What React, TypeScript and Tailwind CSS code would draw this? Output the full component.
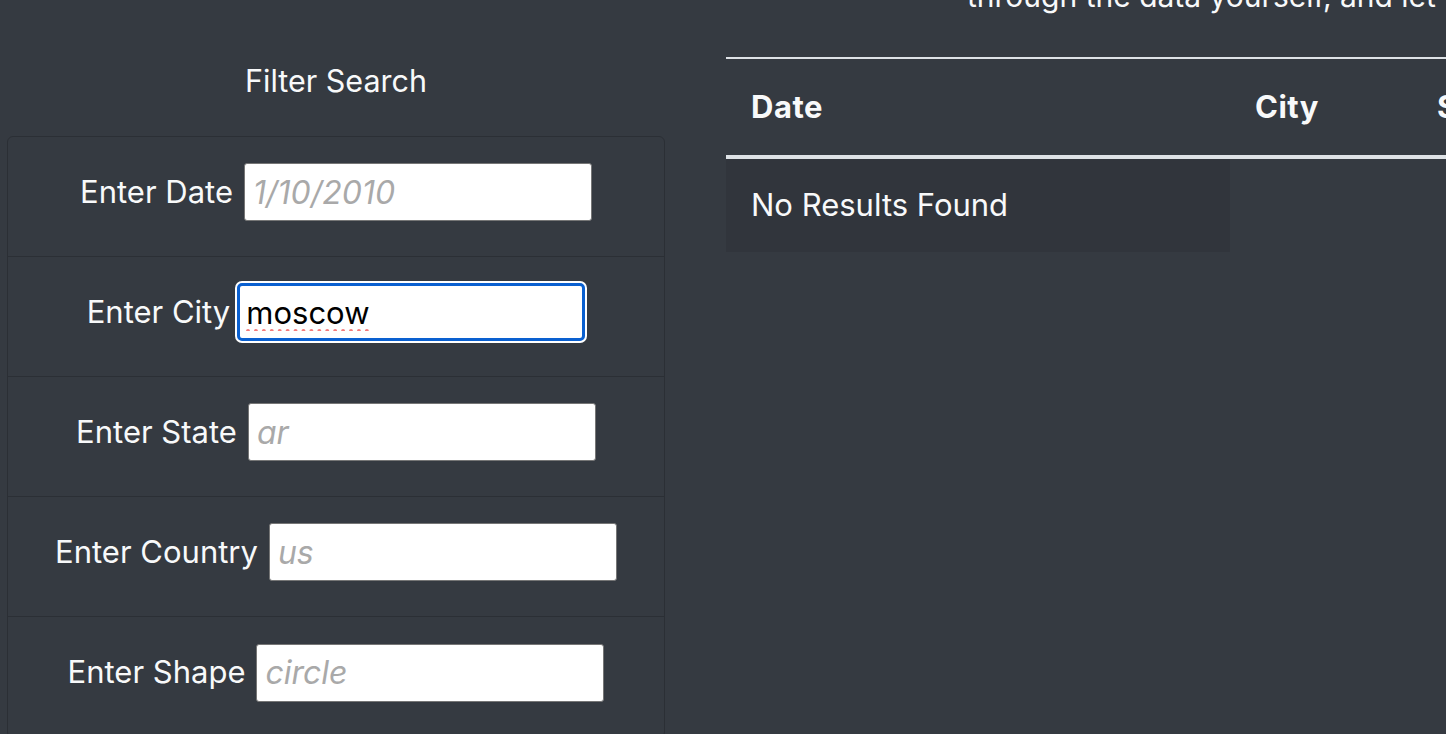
import React from 'react'

const fields = [
  { label: 'Enter Date', placeholder: '1/10/2010', value: '' },
  { label: 'Enter City', placeholder: 'benton', value: 'moscow' },
  { label: 'Enter State', placeholder: 'ar', value: '' },
  { label: 'Enter Country', placeholder: 'us', value: '' },
  { label: 'Enter Shape', placeholder: 'circle', value: '' },
]

function FilterRow({ label, placeholder, value }: { label: string; placeholder: string; value: string }) {
  const focused = value !== ''
  return (
    <li className="h-[120px] pb-[9px] flex items-center justify-center border-b border-[#2b2f35] last:border-b-0">
      <label className={focused ? 'mr-[7px]' : 'mr-[11px]'}>{label}</label>
      {focused ? (
        <input
          type="text"
          defaultValue={value}
          className="w-[348px] h-[58px] bg-white text-black px-[6px] border-[3px] border-[#0a60d0] rounded-[5px] ring-2 ring-white outline-none underline decoration-dotted decoration-[#f47a7a] decoration-[4px] underline-offset-[6px]"
        />
      ) : (
        <input
          type="text"
          placeholder={placeholder}
          className="w-[348px] h-[58px] bg-white text-black text-[32px] px-[8px] border border-[#767676] rounded-[3px] outline-none placeholder:italic placeholder:text-[#a9a9a9]"
        />
      )}
    </li>
  )
}

export default function App() {
  return (
    <div className="h-[734px] w-full overflow-hidden bg-[#353a41] text-[#f8f9fa] font-['Inter',sans-serif] text-[31px]">
      <div className="flex">
        {/* filters */}
        <div className="w-[658px] ml-[7px] shrink-0">
          <h3 className="h-[136px] pt-[26px] flex items-center justify-center text-[30.5px]">Filter Search</h3>
          <ul className="border border-[#2b2f35] rounded-[6px]">
            {fields.map(f => (
              <FilterRow key={f.label} {...f} />
            ))}
          </ul>
        </div>

        {/* results */}
        <div className="ml-[61px] shrink-0 w-[1100px]">
          <div className="h-[57px] relative overflow-hidden">
            <p className="whitespace-nowrap pl-[241px] -mt-[22px] leading-[36px] text-[30px]">
              through the data yourself, and let the results guide you.
            </p>
          </div>
          <table className="table-fixed w-[1100px] border-collapse text-left">
            <thead>
              <tr className="border-t-2 border-[#dee2e6]">
                <th className="w-[504px] h-[99px] px-[25px] font-bold tracking-[0.5px] border-b-4 border-[#dee2e6]">Date</th>
                <th className="w-[182px] px-[25px] font-bold tracking-[0.5px] border-b-4 border-[#dee2e6]">City</th>
                <th className="w-[200px] px-[25px] font-bold tracking-[0.5px] border-b-4 border-[#dee2e6]">State</th>
                <th className="px-[25px] font-bold tracking-[0.5px] border-b-4 border-[#dee2e6]">Country</th>
              </tr>
            </thead>
            <tbody>
              <tr>
                <td className="h-[95px] px-[25px] bg-[#31353c]">No Results Found</td>
              </tr>
            </tbody>
          </table>
        </div>
      </div>
    </div>
  )
}
